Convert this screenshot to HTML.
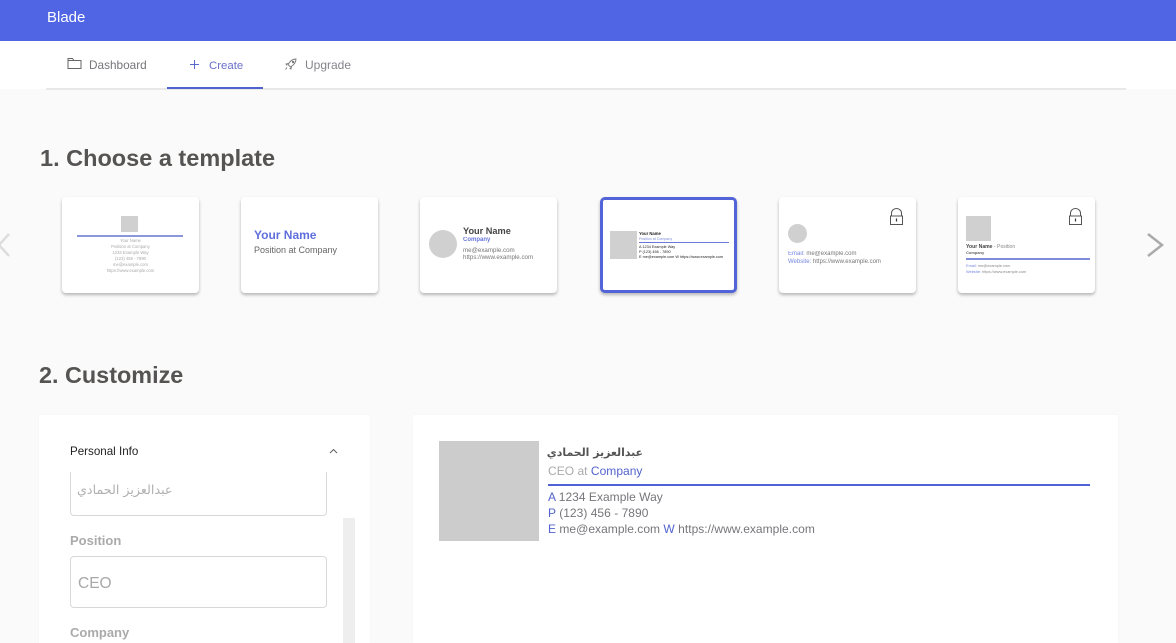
<!DOCTYPE html>
<html lang="en">
<head>
<meta charset="utf-8">
<title>Blade</title>
<style>
html,body{margin:0;padding:0;width:1176px;height:643px;overflow:hidden;background:#fafafa;font-family:"Liberation Sans","Noto Sans CJK SC",sans-serif;}
*{box-sizing:border-box;}
.a{position:absolute;white-space:nowrap;}
.card{position:absolute;top:197px;width:137px;height:96px;background:#fff;border-radius:4px;box-shadow:0 2px 3px rgba(0,0,0,.28);overflow:hidden;}
.card .a{line-height:1;filter:blur(.25px);}
.b{color:#5566dd;}
.g{background:#d0d0d0;}
</style>
</head>
<body>
<div class="a" style="left:0;top:0;width:1176px;height:41px;background:#4f65e3;"></div>
<div class="a" style="left:47px;top:9px;font-size:15px;line-height:18px;color:#fff;">Blade</div>
<div class="a" style="left:0;top:41px;width:1176px;height:48px;background:#fff;"></div>
<div class="a" style="left:46px;top:88px;width:1080px;height:2px;background:#e8e8e8;"></div>
<div class="a" style="left:167px;top:87px;width:96px;height:2px;background:#4f62cf;"></div>

<svg class="a" style="left:67px;top:57px;" width="15" height="13" viewBox="0 0 15 13" fill="none" stroke="#666" stroke-width="1"><path d="M1 11.500V1.500h4.500l1.500 2h7v8z M1 3.500h6"/></svg>
<div class="a" style="left:89px;top:57px;font-size:11.800px;line-height:16px;color:#77757a;">Dashboard</div>
<svg class="a" style="left:188.500px;top:59px;" width="11" height="11" viewBox="0 0 11 11" fill="none" stroke="#5a68cc" stroke-width="1"><path d="M5.500 1v9M1 5.500h9"/></svg>
<div class="a" style="left:209px;top:57.500px;font-size:11.400px;line-height:16px;color:#6a70c8;">Create</div>
<svg class="a" style="left:284px;top:58px;" width="13" height="13" viewBox="0 0 13 13" fill="none" stroke="#777" stroke-width=".9"><path d="M12 1C8.500 1 6 3 4 6.500L6.500 9C10 7 12 4.500 12 1z M4.500 5.500L2 6l1 1.500 M7.500 8.500L7 11 5.500 10 M3 9.500L1.500 11.500 M8.500 3.500h1.200v1.200H8.500z"/></svg>
<div class="a" style="left:305px;top:57px;font-size:12px;line-height:16px;color:#85838a;">Upgrade</div>

<div class="a" style="left:40px;top:144px;font-size:23.500px;line-height:28px;font-weight:700;color:#555453;">1. Choose a template</div>
<div class="a" style="left:39px;top:361px;font-size:23.400px;line-height:28px;font-weight:700;color:#555453;">2. Customize</div>

<svg class="a" style="left:0;top:232px;" width="12" height="26" viewBox="0 0 12 26" fill="none" stroke="#dddddd" stroke-width="2.500"><path d="M9 2L-1 13L9 24"/></svg>
<svg class="a" style="left:1146px;top:232px;" width="18" height="26" viewBox="0 0 18 26" fill="none" stroke="#aaa" stroke-width="2.500"><path d="M2 2L16 13L2 24"/></svg>

<!-- card 1 -->
<div class="card" style="left:62px;">
  <div class="a g" style="left:59px;top:19px;width:17px;height:16px;filter:none;"></div>
  <div class="a" style="left:15px;top:38px;width:106px;height:1.500px;background:#8a96de;"></div>
  <div class="a" style="left:0;width:137px;top:41px;text-align:center;font-size:4.200px;line-height:6.100px;color:#aaa;white-space:normal;">Your Name<br>Position at Company<br>1234 Example Way<br>(123) 456 - 7890<br>me@example.com<br>https://www.example.com</div>
</div>
<!-- card 2 -->
<div class="card" style="left:241px;">
  <div class="a" style="left:13px;top:32px;font-size:12px;font-weight:700;color:#5f6fdc;">Your Name</div>
  <div class="a" style="left:13px;top:49px;font-size:9px;color:#666;">Position at Company</div>
</div>
<!-- card 3 -->
<div class="card" style="left:420px;">
  <div class="a g" style="left:9px;top:33px;width:28px;height:28px;border-radius:50%;filter:none;"></div>
  <div class="a" style="left:43px;top:30px;font-size:9.200px;font-weight:700;color:#444;">Your Name</div>
  <div class="a" style="left:43px;top:40px;font-size:6px;font-weight:700;color:#6676dc;">Company</div>
  <div class="a" style="left:43px;top:50px;font-size:6.200px;line-height:7px;color:#777;">me@example.com<br>https://www.example.com</div>
</div>
<!-- card 4 -->
<div class="card" style="left:600px;border:3px solid #5264d8;border-radius:5px;">
  <div class="a g" style="left:7px;top:31px;width:27px;height:28px;filter:none;"></div>
  <div class="a" style="left:36px;top:32px;font-size:4.200px;font-weight:700;color:#222;">Your Name</div>
  <div class="a" style="left:36px;top:38px;font-size:3.600px;color:#7f8cdc;">Position at Company</div>
  <div class="a" style="left:36px;top:42px;width:90px;height:1px;background:#6a78d8;filter:none;"></div>
  <div class="a" style="left:36px;top:45px;font-size:3.800px;line-height:5px;color:#222;">A 1234 Example Way<br>P (123) 456 - 7890<br>E me@example.com W https://www.example.com</div>
</div>
<!-- card 5 -->
<div class="card" style="left:779px;">
  <div class="a g" style="left:9px;top:27px;width:19px;height:19px;border-radius:50%;filter:none;"></div>
  <div class="a" style="left:9px;top:53px;font-size:6px;line-height:8.300px;color:#777;"><span style="color:#7686e0;">Email:</span> me@example.com<br><span style="color:#7686e0;">Website:</span> https://www.example.com</div>
  <svg class="a" style="left:111px;top:11px;" width="13" height="17" viewBox="0 0 13 17" fill="none" stroke="#555" stroke-width="1"><path d="M.5 8h12v8.500H.5z M1.500 8V5a5 4.500 0 0 1 10 0v3"/><path d="M6.500 10.500v3" stroke-width="1.200" stroke="#333"/></svg>
</div>
<!-- card 6 -->
<div class="card" style="left:958px;">
  <div class="a g" style="left:8px;top:19px;width:25px;height:25px;filter:none;"></div>
  <div class="a" style="left:8px;top:47.500px;font-size:5.100px;color:#888;"><b style="color:#444;">Your Name</b> - Position</div>
  <div class="a" style="left:8px;top:54px;font-size:4px;font-weight:700;color:#666;">Company</div>
  <div class="a" style="left:8px;top:61px;width:124px;height:1.500px;background:#7f8cdc;filter:none;"></div>
  <div class="a" style="left:8px;top:65.500px;font-size:3.900px;line-height:6px;color:#888;"><span style="color:#7686e0;">Email:</span> me@example.com<br><span style="color:#7686e0;">Website:</span> https://www.example.com</div>
  <svg class="a" style="left:111px;top:11px;" width="13" height="17" viewBox="0 0 13 17" fill="none" stroke="#555" stroke-width="1"><path d="M.5 8h12v8.500H.5z M1.500 8V5a5 4.500 0 0 1 10 0v3"/><path d="M6.500 10.500v3" stroke-width="1.200" stroke="#333"/></svg>
</div>

<!-- left panel -->
<div class="a" style="left:39px;top:415px;width:331px;height:228px;background:#fff;box-shadow:0 0 2px rgba(0,0,0,.04);"></div>
<div class="a" style="left:70px;top:444px;font-size:11.600px;line-height:16px;color:#222;">Personal Info</div>
<svg class="a" style="left:329px;top:448px;" width="9" height="6" viewBox="0 0 9 6" fill="none" stroke="#555" stroke-width=".9"><path d="M1 5L4.500 1.500L8 5"/></svg>
<div class="a" style="left:70px;top:472px;width:257px;height:44px;border:1px solid #d8d8d8;border-top:none;border-radius:0 0 4px 4px;"></div>
<div class="a" style="left:77px;top:480px;font-size:12.700px;line-height:20px;color:#b0b0b0;font-family:'DejaVu Sans','Liberation Sans',sans-serif;direction:rtl;">عبدالعزيز الحمادي</div>
<div class="a" style="left:343px;top:518px;width:12px;height:125px;background:#eeeeee;"></div>
<div class="a" style="left:70px;top:532px;font-size:13px;line-height:18px;font-weight:700;color:#aaa;">Position</div>
<div class="a" style="left:70px;top:556px;width:257px;height:52px;border:1px solid #d8d8d8;border-radius:4px;"></div>
<div class="a" style="left:78px;top:574px;font-size:15.500px;line-height:20px;color:#a8a8a8;">CEO</div>
<div class="a" style="left:70px;top:624px;font-size:13px;line-height:18px;font-weight:700;color:#aaa;">Company</div>

<!-- right panel -->
<div class="a" style="left:413px;top:415px;width:705px;height:228px;background:#fff;box-shadow:0 0 2px rgba(0,0,0,.04);"></div>
<div class="a" style="left:439px;top:441px;width:100px;height:100px;background:#cccccc;"></div>
<div class="a" style="left:548px;top:444px;width:95px;text-align:right;font-size:10.900px;line-height:18px;font-weight:700;color:#555;font-family:'DejaVu Sans','Liberation Sans',sans-serif;direction:rtl;">عبدالعزيز الحمادي</div>
<div class="a" style="left:548px;top:464px;font-size:12px;line-height:15px;letter-spacing:.03px;color:#aaa;">CEO at <span class="b" style="color:#5163cc;">Company</span></div>
<div class="a" style="left:548px;top:484px;width:542px;height:2px;background:#4f62d6;"></div>
<div class="a" style="left:548px;top:489px;font-size:12px;line-height:16px;letter-spacing:.03px;color:#77757a;"><span style="color:#5163cc;">A</span> 1234 Example Way<br><span style="color:#5163cc;">P</span> (123) 456 - 7890<br><span style="color:#5163cc;">E</span> me@example.com <span style="color:#5163cc;">W</span> https://www.example.com</div>
</body>
</html>
